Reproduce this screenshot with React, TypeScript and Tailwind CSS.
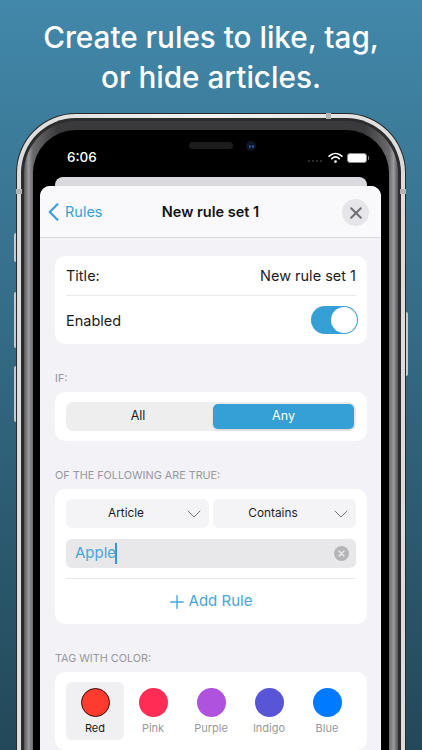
import React from "react";

const font = { fontFamily: "Inter, 'Liberation Sans', sans-serif" };

function Chevron() {
  return (
    <svg width="14" height="8" viewBox="0 0 14 8" fill="none" stroke="#77777c" strokeWidth="1" strokeLinecap="round" strokeLinejoin="round">
      <path d="M1 1l6 6 6-6" />
    </svg>
  );
}

function Select({ label }: { label: string }) {
  return (
    <div className="relative flex h-[29px] flex-1 items-center justify-center rounded-[6px] bg-[#f4f4f6] pr-[23px] text-[11.8px] text-[#1c1c1e]">
      {label}
      <span className="absolute right-[8px] top-[11px] flex">
        <Chevron />
      </span>
    </div>
  );
}

function SectionLabel({ children, className }: { children: React.ReactNode; className: string }) {
  return <div className={`text-[10.8px] leading-[14px] text-[#97979c] ${className}`}>{children}</div>;
}

const colors = [
  { name: "Pink", bg: "bg-[#ff2d55]" },
  { name: "Purple", bg: "bg-[#af52de]" },
  { name: "Indigo", bg: "bg-[#5856d6]" },
  { name: "Blue", bg: "bg-[#007aff]" },
];

export default function App() {
  return (
    <div style={font} className="relative h-[750px] w-[422px] overflow-hidden bg-gradient-to-b from-[#4288aa] to-[#234859]">
      <h1 className="pt-[17px] text-center text-[29.7px] font-medium leading-[40px] text-white">
        Create rules to like, tag,
        <br />
        or hide articles.
      </h1>

      {/* Side buttons */}
      <div className="absolute left-[14px] top-[233px] h-[29px] w-[3px] rounded-l-[2px] bg-[#c9c9c9]" />
      <div className="absolute left-[14px] top-[292px] h-[56px] w-[3px] rounded-l-[2px] bg-[#c9c9c9]" />
      <div className="absolute left-[14px] top-[366px] h-[56px] w-[3px] rounded-l-[2px] bg-[#c9c9c9]" />
      <div className="absolute left-[405px] top-[312px] h-[64px] w-[3px] rounded-r-[2px] bg-[#c9c9c9]" />

      {/* Phone */}
      <div className="relative ml-[16px] mt-[16px] h-[760px] w-[390px] rounded-[60px] bg-[#2a2a2a] p-px">
        <div className="h-full rounded-[59px] bg-gradient-to-r from-[#dcdcdc] via-[#f4f4f4] to-[#dcdcdc] p-[4px]">
          <div className="h-full rounded-[55px] bg-[#2c2c2c] p-[3px]">
            <div className="h-full rounded-[52px] bg-[linear-gradient(90deg,#555557_0%,#9a9a9c_1.2%,#6a6a6c_2.4%,#3a3a3c_9%,#3a3a3c_91%,#6a6a6c_97.6%,#9a9a9c_98.8%,#555557_100%)] p-[9px]">
              <div className="relative flex h-full flex-col rounded-[43px] bg-black pl-[7px] pr-[8px]">
                {/* Status bar */}
                <div className="relative h-[47px] shrink-0">
                  <span className="absolute left-[27px] top-[19px] text-[13.5px] font-medium leading-[17px] text-white">6:06</span>
                  <div className="absolute left-[149px] top-[12px] h-[7px] w-[44px] rounded-full bg-[#1c1c1c]" />
                  <div className="absolute left-[206px] top-[11px] flex h-[10px] w-[10px] items-center justify-center gap-px rounded-full bg-[#0d1526]">
                    <span className="h-[3px] w-[2px] rounded-full bg-[#2f4f92]" />
                    <span className="h-[3px] w-[2px] rounded-full bg-[#2f4f92]" />
                  </div>
                  <div className="absolute left-[268px] top-[30px] flex items-center gap-[2px]">
                    {[0, 1, 2, 3].map((i) => (
                      <span key={i} className="h-[2px] w-[2px] rounded-full bg-[#3a3a3a]" />
                    ))}
                  </div>
                  <svg className="absolute left-[288px] top-[22px]" width="15" height="12" viewBox="0 0 15 12" fill="none" stroke="#fff" strokeLinecap="round">
                    <path d="M1.2 4.2C5 .6 10 .6 13.8 4.2" strokeWidth="1.7" />
                    <path d="M3.8 6.6C6 4.6 9 4.6 11.2 6.6" strokeWidth="1.7" />
                    <circle cx="7.5" cy="9.6" r="1.3" fill="#fff" stroke="none" />
                  </svg>
                  <div className="absolute left-[307px] top-[23px] flex items-center">
                    <div className="h-[10px] w-[20px] rounded-[3px] border border-[#8a8a8a] bg-white" />
                    <div className="ml-px h-[4px] w-px rounded-r-full bg-[#8a8a8a]" />
                  </div>
                </div>

                {/* Card behind */}
                <div className="ml-[15px] mr-[14px] h-[9px] shrink-0 rounded-t-[8px] bg-[#d9d9de]" />

                {/* Sheet */}
                <div className="flex-1 overflow-hidden rounded-t-[10px] bg-[#f2f2f7]">
                  <div className="relative flex h-[52px] items-center justify-center border-b border-[#d8d8de] bg-[#f9f9fb]">
                    <svg className="absolute left-[8px] top-[17px]" width="11" height="18" viewBox="0 0 11 18" fill="none" stroke="#3a9fd6" strokeWidth="2.1" strokeLinecap="round" strokeLinejoin="round">
                      <path d="M9.5 1.2 1.7 9l7.8 7.8" />
                    </svg>
                    <span className="absolute left-[25px] top-[16px] text-[14.5px] leading-[20px] text-[#3a9fd6]">Rules</span>
                    <span className="text-[14.5px] font-semibold text-[#111114]">New rule set 1</span>
                    <div className="absolute right-[12px] top-[13px] flex h-[27px] w-[27px] items-center justify-center rounded-full bg-[#e6e6ea]">
                      <svg width="12" height="12" viewBox="0 0 12 12" fill="none" stroke="#6e6e73" strokeWidth="2" strokeLinecap="round">
                        <path d="M1.2 1.2l9.6 9.6M10.8 1.2l-9.6 9.6" />
                      </svg>
                    </div>
                  </div>

                  <div className="pl-[15px] pr-[14px] pt-[18px]">
                    {/* Title card */}
                    <div className="rounded-[10px] bg-white px-[11px] text-[14.5px] text-[#1c1c1e]">
                      <div className="flex h-[40px] items-center justify-between border-b border-[#e9e9ec]">
                        <span>Title:</span>
                        <span>New rule set 1</span>
                      </div>
                      <div className="flex h-[48px] items-center justify-between">
                        <span className="pt-px">Enabled</span>
                        <div className="-mr-[2px] flex h-[28px] w-[47px] justify-end rounded-full bg-[#34a0d6] p-px">
                          <div className="h-[26px] w-[26px] rounded-full bg-white" />
                        </div>
                      </div>
                    </div>

                    <SectionLabel className="mt-[28px]">IF:</SectionLabel>
                    <div className="mt-[6px] rounded-[10px] bg-white px-[11px] py-[10px]">
                      <div className="flex h-[29px] items-center rounded-[7px] bg-[#eeeeef] pr-[2px] text-[12.5px]">
                        <div className="w-[147px] pr-[3px] text-center text-[#1c1c1e]">All</div>
                        <div className="flex h-[25px] w-[141px] items-center justify-center rounded-[5px] bg-[#34a0d6] text-white shadow-sm">Any</div>
                      </div>
                    </div>

                    <SectionLabel className="mt-[28px]">OF THE FOLLOWING ARE TRUE:</SectionLabel>
                    <div className="mt-[6px] rounded-[10px] bg-white px-[11px] pt-[10px]">
                      <div className="flex gap-[4px]">
                        <Select label="Article" />
                        <Select label="Contains" />
                      </div>
                      <div className="relative mt-[11px] flex h-[29px] items-center rounded-[6px] bg-[#e8e8ea] pl-[9px] text-[15px] text-[#49a5d9]">
                        Apple
                        <span className="-ml-px h-[21px] w-[2px] bg-[#2f9ad4]" />
                        <div className="absolute right-[7px] top-[7px] flex h-[15px] w-[15px] items-center justify-center rounded-full bg-[#b5b5b8]">
                          <svg width="7" height="7" viewBox="0 0 7 7" fill="none" stroke="#e8e8ea" strokeWidth="1.5" strokeLinecap="round">
                            <path d="M1 1l5 5M6 1 1 6" />
                          </svg>
                        </div>
                      </div>
                      <div className="mt-[10px] border-t border-[#e9e9ec]" />
                      <div className="flex h-[45px] items-center justify-center gap-[5px] text-[15px] text-[#49a5d9]">
                        <svg width="14" height="14" viewBox="0 0 14 14" fill="none" stroke="#49a5d9" strokeWidth="1.4" strokeLinecap="round">
                          <path d="M7 .8v12.4M.8 7h12.4" />
                        </svg>
                        Add Rule
                      </div>
                    </div>

                    <SectionLabel className="mt-[28px]">TAG WITH COLOR:</SectionLabel>
                    <div className="mt-[6px] rounded-[10px] bg-white px-[11px] py-[10px]">
                      <div className="flex">
                        <div className="flex h-[58px] w-[58px] flex-col items-center rounded-[6px] bg-[#f0f0f2] pt-[6px] text-[11px] text-[#1c1c1e]">
                          <span className="h-[29px] w-[29px] rounded-full border-[1.5px] border-[#3a0d0a] bg-[#ff3b30]" />
                          <span className="mt-[3px] leading-[16px]">Red</span>
                        </div>
                        {colors.map((c) => (
                          <div key={c.name} className="flex h-[58px] w-[58px] flex-col items-center pt-[6px] text-[11px] text-[#98989d]">
                            <span className={`h-[29px] w-[29px] rounded-full ${c.bg}`} />
                            <span className="mt-[3px] leading-[16px]">{c.name}</span>
                          </div>
                        ))}
                      </div>
                    </div>
                  </div>
                </div>
              </div>
            </div>
          </div>
        </div>
        {/* Antenna bands */}
        <div className="absolute left-[310px] top-0 h-[6px] w-[5px] bg-[#b4b4b4]" />
        <div className="absolute left-0 top-[76px] h-[5px] w-[6px] bg-[#b4b4b4]" />
        <div className="absolute right-0 top-[76px] h-[5px] w-[6px] bg-[#b4b4b4]" />
      </div>
    </div>
  );
}
